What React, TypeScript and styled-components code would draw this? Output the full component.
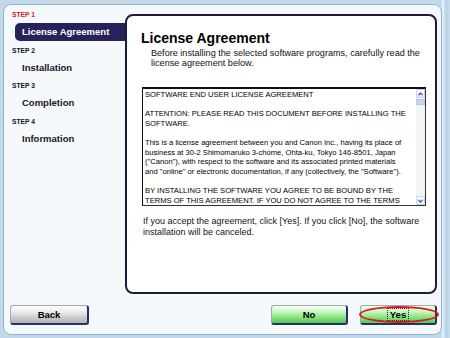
import React from "react";
import styled, { createGlobalStyle } from "styled-components";

const Global = createGlobalStyle`
  html, body { margin: 0; padding: 0; }
  body {
    width: 450px;
    height: 338px;
    overflow: hidden;
    font-family: "Liberation Sans", Arial, sans-serif;
    background: linear-gradient(to right, #c3d9eb 0, #c3d9eb 441px, #e9f2f9 443px, #b4cfe4 446px, #c9deee 450px);
  }
  #root { padding: 4px 8px 3px 3px; box-sizing: border-box; height: 338px; }
`;

const Frame = styled.div`
  box-sizing: border-box;
  height: 331px;
  background: #f6f9fc;
  border: 1px solid #92b3cf;
  border-radius: 8px;
  display: flex;
  flex-direction: column;
`;

const Body = styled.div`
  display: flex;
  align-items: flex-start;
`;

const Sidebar = styled.div`
  width: 121px;
  padding-top: 5px;
  display: flex;
  flex-direction: column;
  gap: 4.5px;
`;

const StepGroup = styled.div`
  display: flex;
  flex-direction: column;
  gap: 3px;
`;

const StepLabel = styled.div<{ $active?: boolean }>`
  height: 10px;
  line-height: 10px;
  padding-left: 8px;
  font-size: 6.7px;
  font-weight: bold;
  color: ${(p) => (p.$active ? "#e3141c" : "#111")};
`;

const StepName = styled.div<{ $active?: boolean }>`
  height: 18px;
  line-height: 18px;
  margin-left: 11px;
  padding-left: 7px;
  font-size: 9.5px;
  font-weight: bold;
  color: ${(p) => (p.$active ? "#fff" : "#15152a")};
  background: ${(p) => (p.$active ? "#27235a" : "transparent")};
  border-radius: 5px 0 0 5px;
`;

const Panel = styled.div`
  box-sizing: border-box;
  margin-top: 9px;
  width: 312px;
  height: 280px;
  background: #fff;
  border: 2px solid #1d1a45;
  border-radius: 8px;
  padding: 14px 9px 0 14px;
  display: flex;
  flex-direction: column;
`;

const Title = styled.div`
  font-size: 14px;
  line-height: 16px;
  font-weight: bold;
  color: #000;
`;

const Intro = styled.div`
  margin-top: 3px;
  padding-left: 10px;
  font-size: 9.1px;
  line-height: 9.5px;
  color: #111;
`;

const LicenseBox = styled.div`
  box-sizing: border-box;
  margin-top: 19px;
  margin-left: 1px;
  height: 119px;
  border: 1px solid #333;
  border-top: 2px solid #111;
  border-left: 1px solid #111;
  display: flex;
  overflow: hidden;
`;

const LicenseText = styled.div`
  flex: 1;
  padding: 1px 0 0 2px;
  font-size: 7.6px;
  line-height: 9.6px;
  color: #000;
  white-space: nowrap;
  overflow: hidden;
`;

const Line = styled.div`
  height: 9.6px;
`;

const ScrollBar = styled.div`
  width: 9px;
  background: #f3f4f6;
  display: flex;
  flex-direction: column;
  justify-content: space-between;
  position: relative;
`;

const ScrollButton = styled.div`
  box-sizing: border-box;
  height: 9px;
  background: linear-gradient(#ffffff, #dfe8f6);
  border: 1px solid #c8d4ea;
  border-radius: 1px;
  display: flex;
  align-items: center;
  justify-content: center;
`;

const Thumb = styled.div`
  position: absolute;
  left: 0;
  right: 0;
  top: 10px;
  height: 6px;
  background: #c9d8ef;
  border: 1px solid #b6c8e6;
  box-sizing: border-box;
`;

const Notice = styled.div`
  margin-top: 10px;
  margin-left: 2px;
  font-size: 9px;
  line-height: 11px;
  color: #111;
`;

const Footer = styled.div`
  display: flex;
  align-items: center;
  margin-top: 11px;
  padding: 0 4px 0 6px;
`;

const Spacer = styled.div`
  flex: 1;
`;

const Button = styled.div<{ $variant: "silver" | "green" }>`
  position: relative;
  box-sizing: border-box;
  width: ${(p) => (p.$variant === "silver" ? "79px" : "77px")};
  height: 20px;
  border-radius: 3px;
  border: 1px solid #a3a9b3;
  border-right: 2px solid #27306a;
  border-bottom: 2px solid #27306a;
  background: ${(p) =>
    p.$variant === "silver"
      ? "linear-gradient(#ffffff 0%, #ececec 35%, #c9c9c9 70%, #b5b5b5 100%)"
      : "linear-gradient(#f4fff2 0%, #c8f5c0 35%, #7fe07a 70%, #4fcf4c 100%)"};
  display: flex;
  align-items: center;
  justify-content: center;
  font-size: 9.5px;
  font-weight: bold;
  color: #000;
`;

const ButtonGap = styled.div`
  width: 12px;
`;

const FocusLabel = styled.span`
  border: 1px dotted #222;
  padding: 0 2px;
  line-height: 11px;
`;

const Highlight = styled.span`
  position: absolute;
  left: -2px;
  right: -4px;
  top: 0px;
  bottom: 0px;
  border: 2px solid #e2141b;
  border-radius: 50%;
  pointer-events: none;
`;

const Caret = ({ up }: { up?: boolean }) => (
  <svg width="5" height="4" viewBox="0 0 5 4">
    <path
      d={up ? "M0.5 3.2 L2.5 1 L4.5 3.2" : "M0.5 0.8 L2.5 3 L4.5 0.8"}
      fill="none"
      stroke="#2a3f8f"
      strokeWidth="1.1"
    />
  </svg>
);

const steps = [
  { label: "STEP 1", name: "License Agreement", active: true },
  { label: "STEP 2", name: "Installation" },
  { label: "STEP 3", name: "Completion" },
  { label: "STEP 4", name: "Information" },
];

const licenseLines = [
  "SOFTWARE END USER LICENSE AGREEMENT",
  "",
  "ATTENTION: PLEASE READ THIS DOCUMENT BEFORE INSTALLING THE",
  "SOFTWARE.",
  "",
  "This is a license agreement between you and Canon Inc., having its place of",
  "business at 30-2 Shimomaruko 3-chome, Ohta-ku, Tokyo 146-8501, Japan",
  "(\"Canon\"), with respect to the software and its associated printed materials",
  "and \"online\" or electronic documentation, if any (collectively, the \"Software\").",
  "",
  "BY INSTALLING THE SOFTWARE YOU AGREE TO BE BOUND BY THE",
  "TERMS OF THIS AGREEMENT.  IF YOU DO NOT AGREE TO THE TERMS",
  "OF THIS AGREEMENT, PROMPTLY CLOSE THIS INSTALLATION",
];

export default function App() {
  return (
    <>
      <Global />
      <Frame>
        <Body>
          <Sidebar>
            {steps.map((s) => (
              <StepGroup key={s.label}>
                <StepLabel $active={s.active}>{s.label}</StepLabel>
                <StepName $active={s.active}>{s.name}</StepName>
              </StepGroup>
            ))}
          </Sidebar>
          <Panel>
            <Title>License Agreement</Title>
            <Intro>
              Before installing the selected software programs, carefully read the
              <br />
              license agreement below.
            </Intro>
            <LicenseBox>
              <LicenseText>
                {licenseLines.map((l, i) => (
                  <Line key={i}>{l}</Line>
                ))}
              </LicenseText>
              <ScrollBar>
                <ScrollButton>
                  <Caret up />
                </ScrollButton>
                <Thumb />
                <ScrollButton>
                  <Caret />
                </ScrollButton>
              </ScrollBar>
            </LicenseBox>
            <Notice>
              If you accept the agreement, click [Yes]. If you click [No], the software
              <br />
              installation will be canceled.
            </Notice>
          </Panel>
        </Body>
        <Footer>
          <Button $variant="silver">Back</Button>
          <Spacer />
          <Button $variant="green">No</Button>
          <ButtonGap />
          <Button $variant="green">
            <FocusLabel>Yes</FocusLabel>
            <Highlight />
          </Button>
        </Footer>
      </Frame>
    </>
  );
}
